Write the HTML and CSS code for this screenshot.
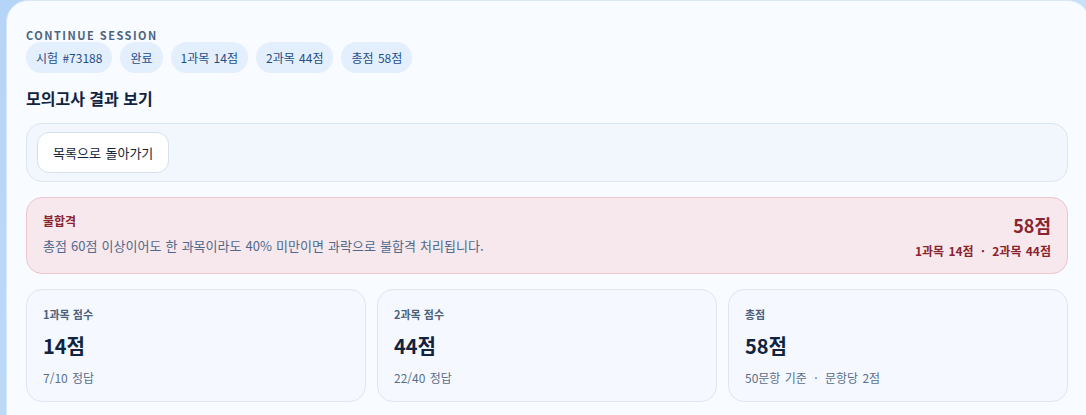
FILE: index.html
```html
<!DOCTYPE html>
<html lang="ko">
<head>
  <meta charset="UTF-8" />
  <meta name="viewport" content="width=device-width, initial-scale=1.0" />
  <title>모의고사 결과 보기</title>
  <link rel="stylesheet" href="styles.css">
</head>
<body>
  <div class="panel">
    <div class="eyebrow">CONTINUE SESSION</div>
    <div class="chips">
      <span class="chip">시험 #73188</span>
      <span class="chip">완료</span>
      <span class="chip">1과목 14점</span>
      <span class="chip">2과목 44점</span>
      <span class="chip">총점 58점</span>
    </div>
    <h2>모의고사 결과 보기</h2>

    <div class="toolbar">
      <button type="button">목록으로 돌아가기</button>
    </div>

    <div class="alert">
      <div>
        <div class="alert-title">불합격</div>
        <div class="alert-text">총점 60점 이상이어도 한 과목이라도 40% 미만이면 과락으로 불합격 처리됩니다.</div>
      </div>
      <div class="alert-score">
        <div class="big">58점</div>
        <div class="small">1과목 14점 <span class="dot">·</span> 2과목 44점</div>
      </div>
    </div>

    <div class="cards">
      <div class="card">
        <div class="label">1과목 점수</div>
        <div class="value">14점</div>
        <div class="sub">7/10 정답</div>
      </div>
      <div class="card">
        <div class="label">2과목 점수</div>
        <div class="value">44점</div>
        <div class="sub">22/40 정답</div>
      </div>
      <div class="card">
        <div class="label">총점</div>
        <div class="value">58점</div>
        <div class="sub">50문항 기준 <span class="dot">·</span> 문항당 2점</div>
      </div>
    </div>
  </div>
</body>
</html>
```

FILE: styles.css
```css
body {
  margin: 0;
  height: 415px;
  overflow: hidden;
  background: linear-gradient(135deg, #b4d5f7, #cfe3f8);
  font-family: "Noto Sans CJK KR", sans-serif;
  color: #10233f;
}
.panel {
  margin-left: 6px;
  width: 1084px;
  height: 440px;
  box-sizing: border-box;
  background: #f8fbff;
  border: 1px solid #d9e7f7;
  border-radius: 22px;
  padding: 27px 0 0 19px;
}
.panel > * {
  width: 1042px;
}
.eyebrow {
  font-size: 11px;
  font-weight: bold;
  letter-spacing: 1.5px;
  color: #4c6380;
  line-height: 14px;
}
.chips {
  display: flex;
  gap: 8px;
}
.chip {
  background: #e4effd;
  color: #1f4f8a;
  font-size: 12px;
  height: 31px;
  line-height: 31px;
  padding: 0 10px;
  border-radius: 16px;
  word-spacing: 1px;
}
h2 {
  font-size: 16px;
  margin: 15px 0 0;
  line-height: 20px;
}
.toolbar {
  margin-top: 15px;
  box-sizing: border-box;
  height: 59px;
  padding: 8px 10px;
  background: #f2f7fe;
  border: 1px solid #dbe6f3;
  border-radius: 16px;
}
button {
  height: 41px;
  padding: 0 15px;
  background: white;
  border: 1px solid #d6e1ee;
  border-radius: 12px;
  font-family: inherit;
  font-size: 13px;
  color: #14243a;
  word-spacing: 1px;
}
.alert {
  margin-top: 15px;
  box-sizing: border-box;
  height: 77px;
  padding: 15px 16px 0 16px;
  background: #f6e8ec;
  border: 1px solid #ecc6ca;
  border-radius: 16px;
  display: flex;
  justify-content: space-between;
}
.alert-title {
  font-size: 12px;
  font-weight: bold;
  color: #8a2430;
  line-height: 16px;
}
.alert-text {
  font-size: 13px;
  color: #50688a;
  margin-top: 8px;
  line-height: 18px;
  word-spacing: 0.5px;
}
.alert-score {
  text-align: right;
  color: #8a2430;
  font-weight: bold;
}
.alert-score .big {
  font-size: 18px;
  line-height: 24px;
}
.alert-score .small {
  font-size: 12px;
  line-height: 16px;
  margin-top: 6px;
  word-spacing: 1px;
}
.dot {
  margin: 0 3px;
}
.cards {
  margin-top: 15px;
  display: grid;
  grid-template-columns: repeat(3, 1fr);
  gap: 11px;
}
.card {
  box-sizing: border-box;
  height: 113px;
  padding: 17px 16px 0;
  background: #f5f9ff;
  border: 1px solid #dfe6f3;
  border-radius: 16px;
}
.label {
  font-size: 11px;
  font-weight: bold;
  color: #4c5f7c;
  line-height: 14px;
}
.value {
  font-size: 20px;
  font-weight: bold;
  margin-top: 12px;
  line-height: 26px;
}
.sub {
  font-size: 12px;
  color: #5a6f8c;
  margin-top: 11px;
  line-height: 16px;
  word-spacing: 1px;
}
```
